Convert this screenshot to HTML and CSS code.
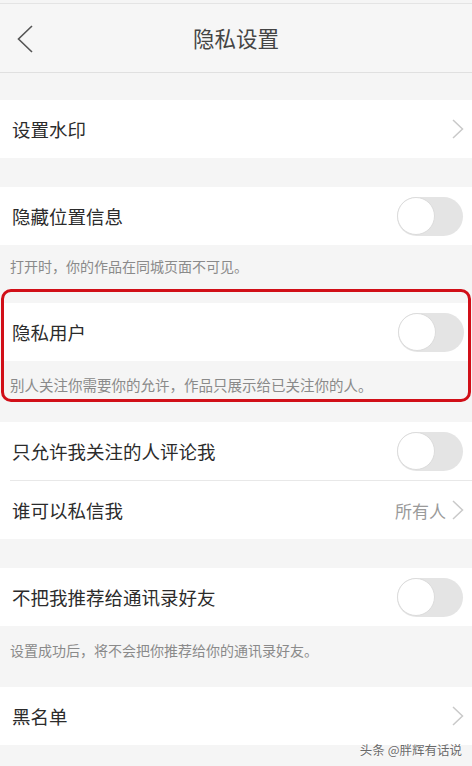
FILE: index.html
```html
<!DOCTYPE html>
<html lang="zh-CN">

  <head>
    <meta charset="UTF-8">
    <meta name="viewport" content="width=device-width, initial-scale=1.0">
    <title>隐私设置</title>
    <link rel="stylesheet" href="styles.css">
  </head>

  <body>
    <div class="topline"></div>
    <div class="header">
      <svg class="back" width="16" height="28" viewBox="0 0 16 28">
        <path d="M15 1 L1.5 14 L15 27" fill="none" stroke="#555" stroke-width="1.6" />
      </svg>
      <h1>隐私设置</h1>
      <span></span>
    </div>

    <div class="group gap-first">
      <div class="row">
        <span class="label">设置水印</span>
        <svg class="arrow" width="12" height="20" viewBox="0 0 12 20">
          <path d="M1 1 L10.5 10 L1 19" fill="none" stroke="#c9c9c9" stroke-width="1.5" />
        </svg>
      </div>
    </div>

    <div class="group gap">
      <div class="row">
        <span class="label">隐藏位置信息</span>
        <div class="toggle"><div class="knob"></div></div>
      </div>
    </div>
    <p class="desc">打开时，你的作品在同城页面不可见。</p>

    <div class="marked">
      <div class="group">
        <div class="row">
          <span class="label">隐私用户</span>
          <div class="toggle"><div class="knob"></div></div>
        </div>
      </div>
      <p class="desc">别人关注你需要你的允许，作品只展示给已关注你的人。</p>
    </div>

    <div class="group gap-small">
      <div class="row divided">
        <span class="label">只允许我关注的人评论我</span>
        <div class="toggle"><div class="knob"></div></div>
      </div>
      <div class="row">
        <span class="label">谁可以私信我</span>
        <span class="value">所有人
          <svg class="arrow" width="12" height="20" viewBox="0 0 12 20">
            <path d="M1 1 L10.5 10 L1 19" fill="none" stroke="#c9c9c9" stroke-width="1.5" />
          </svg>
        </span>
      </div>
    </div>

    <div class="group gap">
      <div class="row">
        <span class="label">不把我推荐给通讯录好友</span>
        <div class="toggle"><div class="knob"></div></div>
      </div>
    </div>
    <p class="desc tall">设置成功后，将不会把你推荐给你的通讯录好友。</p>

    <div class="group">
      <div class="row">
        <span class="label">黑名单</span>
        <svg class="arrow" width="12" height="20" viewBox="0 0 12 20">
          <path d="M1 1 L10.5 10 L1 19" fill="none" stroke="#c9c9c9" stroke-width="1.5" />
        </svg>
      </div>
    </div>

    <div class="watermark">头条 @胖辉有话说</div>
  </body>

</html>
```

FILE: styles.css
```css
body {
  margin: 0;
  background-color: #f5f5f5;
  font-family: "Noto Sans CJK SC", "Noto Sans", sans-serif;
  color: #2b2b2b;
  position: relative;
  min-height: 766px;
}

.topline {
  height: 3px;
  border-bottom: 1px solid #e4e4e4;
}

.header {
  height: 68px;
  display: grid;
  grid-template-columns: 60px 1fr 60px;
  align-items: center;
  border-bottom: 1px solid #e0e0e0;
  background-color: #f6f6f6;
}

.back {
  margin-left: 17px;
  margin-top: 1px;
}

h1 {
  margin: 0;
  text-align: center;
  font-size: 21.5px;
  font-weight: 400;
  color: #444;
  line-height: 1;
}

.group {
  background-color: #fff;
}

.gap-first {
  margin-top: 27px;
}

.gap {
  margin-top: 29px;
}

.gap-small {
  margin-top: 20px;
}

.row {
  height: 58px;
  display: flex;
  align-items: center;
  justify-content: space-between;
  padding: 0 8px 0 12px;
}

.row.divided {
  border-bottom: 1px solid #e8e8e8;
  margin-left: 10px;
  padding-left: 2px;
}

.label {
  font-size: 18.5px;
  line-height: 1;
}

.arrow {
  display: block;
}

.value {
  display: flex;
  align-items: center;
  gap: 6px;
  font-size: 17px;
  color: #9a9a9a;
}

.toggle {
  width: 66px;
  height: 39px;
  border-radius: 20px;
  background-color: #e4e4e4;
  margin-right: 1px;
  position: relative;
}

.knob {
  width: 38px;
  height: 38px;
  border-radius: 50%;
  background-color: #fff;
  border: 1px solid #dcdcdc;
  box-sizing: border-box;
  margin-top: 0.5px;
}

.desc {
  margin: 0;
  padding: 12px 10px 14px;
  font-size: 14px;
  line-height: 18px;
  color: #8a8a8a;
}

.desc.tall {
  padding: 15px 10px 28px;
}

.marked {
  margin: 0 1px;
  border: 3px solid #d10f18;
  border-radius: 10px;
  padding-top: 11px;
}

.marked .row {
  padding-left: 8px;
  padding-right: 3px;
}

.marked .desc {
  padding: 15px 6px 5px;
  font-size: 14.5px;
}

.watermark {
  position: absolute;
  right: 10px;
  top: 740px;
  font-size: 12.5px;
  color: #6a6a6a;
  text-shadow: 0 0 2px #fff, 0 0 2px #fff;
}
```
